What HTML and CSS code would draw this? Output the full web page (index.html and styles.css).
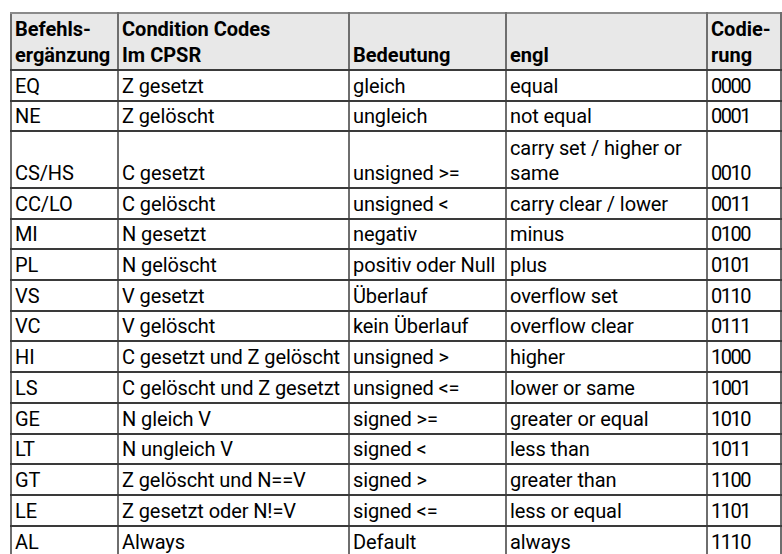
FILE: index.html
```html
<!DOCTYPE html>
<html lang="de">
<head>
<meta charset="utf-8">
<title>Condition Codes</title>
<link rel="stylesheet" href="styles.css">
</head>
<body>
<table class="cc">
  <colgroup>
    <col class="c1"><col class="c2"><col class="c3"><col class="c4"><col class="c5">
  </colgroup>
  <thead>
    <tr class="hd">
      <th>Befehls-<br>ergänzung</th>
      <th>Condition Codes<br>Im CPSR</th>
      <th>Bedeutung</th>
      <th>engl</th>
      <th class="code">Codie-<br>rung</th>
    </tr>
  </thead>
  <tbody>
    <tr><td>EQ</td><td>Z gesetzt</td><td>gleich</td><td>equal</td><td class="code">0000</td></tr>
    <tr class="s"><td>NE</td><td>Z gelöscht</td><td>ungleich</td><td>not equal</td><td class="code">0001</td></tr>
    <tr class="tall"><td>CS/HS</td><td>C gesetzt</td><td>unsigned &gt;=</td><td>carry set / higher or<br>same</td><td class="code">0010</td></tr>
    <tr><td>CC/LO</td><td>C gelöscht</td><td>unsigned &lt;</td><td>carry clear / lower</td><td class="code">0011</td></tr>
    <tr class="s"><td>MI</td><td>N gesetzt</td><td>negativ</td><td>minus</td><td class="code">0100</td></tr>
    <tr><td>PL</td><td>N gelöscht</td><td>positiv oder Null</td><td>plus</td><td class="code">0101</td></tr>
    <tr><td>VS</td><td>V gesetzt</td><td>Überlauf</td><td>overflow set</td><td class="code">0110</td></tr>
    <tr class="s"><td>VC</td><td>V gelöscht</td><td>kein Überlauf</td><td>overflow clear</td><td class="code">0111</td></tr>
    <tr><td>HI</td><td>C gesetzt und Z gelöscht</td><td>unsigned &gt;</td><td>higher</td><td class="code">1000</td></tr>
    <tr><td>LS</td><td>C gelöscht und Z gesetzt</td><td>unsigned &lt;=</td><td>lower or same</td><td class="code">1001</td></tr>
    <tr><td>GE</td><td>N gleich V</td><td>signed &gt;=</td><td>greater or equal</td><td class="code">1010</td></tr>
    <tr class="s"><td>LT</td><td>N ungleich V</td><td>signed &lt;</td><td>less than</td><td class="code">1011</td></tr>
    <tr><td>GT</td><td>Z gelöscht und N==V</td><td>signed &gt;</td><td>greater than</td><td class="code">1100</td></tr>
    <tr><td>LE</td><td>Z gesetzt oder N!=V</td><td>signed &lt;=</td><td>less or equal</td><td class="code">1101</td></tr>
    <tr><td>AL</td><td>Always</td><td>Default</td><td>always</td><td class="code">1110</td></tr>
  </tbody>
</table>
</body>
</html>
```
FILE: styles.css
```css
html, body {
  margin: 0;
  padding: 0;
  background: #ffffff;
}
body {
  padding: 12px 0 0 10px;
  font-family: Roboto, "Liberation Sans", sans-serif;
  color: #000;
  overflow: hidden;
}
.cc {
  border-collapse: collapse;
  table-layout: fixed;
  width: 770px;
}
.c1 { width: 107px; }
.c2 { width: 231px; }
.c3 { width: 157px; }
.c4 { width: 201px; }
.c5 { width: 74px; }

.cc th, .cc td {
  border-left: 2px solid #6e6e6e;
  border-right: 2px solid #6e6e6e;
  border-top: 2px solid #3a3a3a;
  border-bottom: 2px solid #3a3a3a;
  vertical-align: bottom;
  text-align: left;
  padding: 0 2px 2px 3px;
  white-space: nowrap;
  overflow: hidden;
}
.cc th {
  background: #e8e8e8;
  font-weight: 700;
  font-size: 20px;
  line-height: 26px;
  padding-bottom: 1px;
  border-top-color: #8a8a8a;
}
.cc td {
  font-size: 20px;
  line-height: 24.3px;
  letter-spacing: -0.1px;
}
.cc td.code {
  letter-spacing: -1.5px;
}
.hd { height: 57px; }
.cc tbody tr { height: 31px; }
.cc tbody tr.s { height: 30px; }
.cc tbody tr.tall { height: 57px; }
```
